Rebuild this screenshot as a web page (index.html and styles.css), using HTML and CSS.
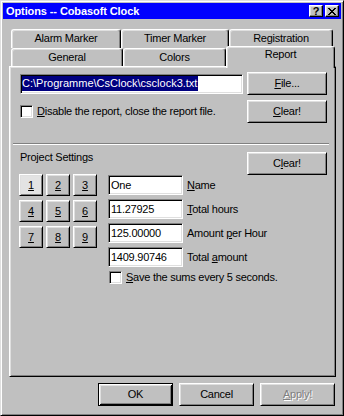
FILE: index.html
```html
<!DOCTYPE html>
<html>
<head>
<meta charset="utf-8">
<title>Options -- Cobasoft Clock</title>
<link rel="stylesheet" href="styles.css">
</head>
<body>
<div class="window">
  <div class="titlebar">
    <span class="title">Options -- Cobasoft Clock</span>
    <div class="caption-btns">
      <span class="cbtn help">?</span>
      <span class="cbtn close"><svg width="8" height="7" viewBox="0 0 8 7"><path fill="#000" d="M0 0h2v1H0z M6 0h2v1H6z M1 1h2v1H1z M5 1h2v1H5z M2 2h4v1H2z M3 3h2v1H3z M2 4h4v1H2z M1 5h2v1H1z M5 5h2v1H5z M0 6h2v1H0z M6 6h2v1H6z"/></svg></span>
    </div>
  </div>
  <div class="client">
    <div class="tabs">
      <div class="tabrow back">
        <div class="tab t-alarm">Alarm Marker</div>
        <div class="tab t-timer">Timer Marker</div>
        <div class="tab t-reg">Registration</div>
      </div>
      <div class="tabrow front">
        <div class="tab t-general">General</div>
        <div class="tab t-colors">Colors</div>
        <div class="tab t-report selected">Report</div>
      </div>
    </div>
    <div class="panel">
      <div class="row file-row">
        <div class="field path-field"><span class="selection">C:\Programme\CsClock\csclock3.txt</span></div>
        <div class="btn"><span><u>F</u>ile...</span></div>
      </div>
      <div class="row disable-row">
        <label class="checkrow"><span class="check"></span><span class="ctext"><u>D</u>isable the report, close the report file.</span></label>
        <div class="btn"><span><u>C</u>lear!</span></div>
      </div>
      <div class="separator"></div>
      <div class="project">
        <div class="project-main">
          <div class="group-label">Project Settings</div>
          <div class="project-body">
            <div class="numgrid">
              <div class="btn num active"><u>1</u></div>
              <div class="btn num"><u>2</u></div>
              <div class="btn num"><u>3</u></div>
              <div class="btn num"><u>4</u></div>
              <div class="btn num"><u>5</u></div>
              <div class="btn num"><u>6</u></div>
              <div class="btn num"><u>7</u></div>
              <div class="btn num"><u>8</u></div>
              <div class="btn num"><u>9</u></div>
            </div>
            <div class="fields">
              <div class="frow"><div class="field small">One</div><span class="flabel"><u>N</u>ame</span></div>
              <div class="frow"><div class="field small">11.27925</div><span class="flabel"><u>T</u>otal hours</span></div>
              <div class="frow"><div class="field small">125.00000</div><span class="flabel">Amount <u>p</u>er Hour</span></div>
              <div class="frow"><div class="field small">1409.90746</div><span class="flabel">Total <u>a</u>mount</span></div>
              <label class="checkrow save"><span class="check"></span><span class="ctext"><u>S</u>ave the sums every 5 seconds.</span></label>
            </div>
          </div>
        </div>
        <div class="btn"><span>C<u>l</u>ear!</span></div>
      </div>
    </div>
    <div class="footer">
      <div class="btn default">OK</div>
      <div class="btn">Cancel</div>
      <div class="btn disabled"><span><u>A</u>pply!</span></div>
    </div>
  </div>
</div>
</body>
</html>
```
FILE: styles.css
```css
* { box-sizing: border-box; }
html, body { margin: 0; padding: 0; }
body {
  font-family: "Liberation Sans", Arial, sans-serif;
  font-size: 11px;
  line-height: 13px;
  color: #000;
  background: #c0c0c0;
  letter-spacing: -0.25px;
}
u { text-decoration: underline; text-underline-offset: 1px; }

.window {
  width: 344px;
  height: 416px;
  background: #c0c0c0;
  border: 1px solid;
  border-color: #dfdfdf #000 #000 #dfdfdf;
  box-shadow: inset 1px 1px #fff, inset -1px -1px #808080;
  padding: 2px;
  display: flex;
  flex-direction: column;
}

.titlebar {
  height: 16px;
  background: #0000ff;
  display: flex;
  align-items: center;
  justify-content: space-between;
  padding: 0 2px 0 3px;
}
.title {
  color: #fff;
  font-weight: bold;
  letter-spacing: -0.1px;
}
.caption-btns { display: flex; gap: 2px; }
.cbtn {
  width: 14px;
  height: 12px;
  background: #c0c0c0;
  border: 1px solid;
  border-color: #fff #000 #000 #fff;
  box-shadow: inset -1px -1px #808080, inset 1px 1px #dfdfdf;
  display: flex;
  align-items: center;
  justify-content: center;
  font-weight: bold;
  font-size: 11px;
  line-height: 10px;
  letter-spacing: 0;
}
.cbtn svg { display: block; }

.client {
  flex: 1;
  display: flex;
  flex-direction: column;
  padding: 10px 0 0 6px;
}

.tabs { display: flex; flex-direction: column; padding-left: 2px; }
.tabrow { display: flex; }
.tabrow.back { height: 19px; }
.tabrow.front { height: 18px; align-items: flex-end; }
.tab {
  height: 100%;
  background: #c0c0c0;
  border-left: 1px solid #fff;
  border-top: 1px solid #fff;
  border-right: 1px solid #000;
  border-radius: 3px 3px 0 0;
  box-shadow: inset -1px 0 #808080, inset 1px 1px #dfdfdf;
  text-align: center;
  padding-top: 2px;
  white-space: nowrap;
}
.t-alarm { width: 110px; }
.t-timer { width: 108px; }
.t-reg { width: 104px; }
.t-general { width: 112px; }
.t-colors { width: 103px; }
.tab.selected {
  width: 109px;
  height: 22px;
  margin-bottom: -2px;
  padding-top: 1px;
  position: relative;
  z-index: 1;
}

.panel {
  width: 327px;
  height: 311px;
  border: 1px solid;
  border-color: #fff #000 #000 #fff;
  box-shadow: inset 1px 1px #dfdfdf, inset -1px -1px #808080;
  padding: 5px 8px 0 10px;
}

.row {
  display: flex;
  justify-content: space-between;
  align-items: center;
}
.disable-row { margin-top: 5px; }

.btn {
  width: 80px;
  height: 23px;
  background: #c0c0c0;
  border: 1px solid;
  border-color: #fff #000 #000 #fff;
  box-shadow: inset 1px 1px #dfdfdf, inset -1px -1px #808080;
  display: flex;
  align-items: center;
  justify-content: center;
  flex: none;
  white-space: nowrap;
}

.field {
  height: 20px;
  background: #fff;
  border: 1px solid;
  border-color: #808080 #fff #fff #808080;
  box-shadow: inset 1px 1px #000, inset -1px -1px #dfdfdf;
  display: flex;
  align-items: center;
  padding: 0 2px;
  flex: none;
  white-space: nowrap;
}
.path-field { width: 223px; padding: 0 1px; }
.selection {
  display: inline-block;
  height: 15px;
  line-height: 15px;
  background: #000080;
  color: #fff;
  padding: 0 1px 0 0;
  letter-spacing: 0;
}

.checkrow {
  display: flex;
  align-items: center;
  gap: 4px;
}
.ctext, .flabel, .group-label { white-space: nowrap; }
.check {
  width: 13px;
  height: 13px;
  background: #fff;
  border: 1px solid;
  border-color: #808080 #fff #fff #808080;
  box-shadow: inset 1px 1px #000, inset -1px -1px #dfdfdf;
  flex: none;
}

.separator {
  height: 2px;
  border-top: 1px solid #808080;
  border-bottom: 1px solid #fff;
  margin: 20px -2px 0 -7px;
}

.project {
  display: flex;
  justify-content: space-between;
  align-items: flex-start;
  margin-top: 7px;
}
.project-main { flex: 1; min-width: 0; }
.group-label { margin-top: -1px; }
.project-body {
  display: flex;
  align-items: flex-start;
  margin-top: 10px;
}
.numgrid {
  display: grid;
  grid-template-columns: repeat(3, 24px);
  grid-auto-rows: 22px;
  column-gap: 3px;
  row-gap: 4px;
  margin-left: -1px;
  flex: none;
}
.btn.num { width: 24px; height: 22px; }
.btn.num.active { background: #e3e3e3; }

.fields {
  display: flex;
  flex-direction: column;
  gap: 4px;
  margin-left: 11px;
  margin-top: 1px;
  flex: none;
}
.frow { display: flex; align-items: center; gap: 4px; }
.field.small { width: 75px; }
.checkrow.save { margin-left: 1px; }

.footer {
  display: flex;
  justify-content: flex-end;
  gap: 6px;
  padding-right: 6px;
  margin-top: 6px;
}
.footer .btn { width: 75px; }
.btn.default {
  border-color: #000;
  box-shadow: inset 1px 1px #fff, inset -1px -1px #000, inset 2px 2px #dfdfdf, inset -2px -2px #808080;
}
.btn.disabled { color: #808080; text-shadow: 1px 1px #fff; }
```
